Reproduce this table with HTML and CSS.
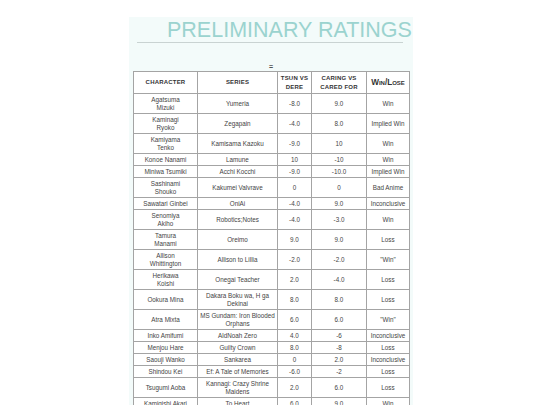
FILE: index.html
```html
<!DOCTYPE html>
<html lang="en">
<head>
    <meta charset="UTF-8">
    <title>Preliminary Ratings</title>
    <link rel="stylesheet" href="styles.css">
</head>
<body>
    <div class="panel">
        <h1 class="title">PRELIMINARY RATINGS</h1>
        <div class="rule"></div>
        <div class="eq">=</div>
        <table class="ratings">
            <colgroup>
                <col class="c-char">
                <col class="c-series">
                <col class="c-tsun">
                <col class="c-care">
                <col class="c-win">
            </colgroup>
            <thead>
                <tr>
                    <th>Character</th>
                    <th>Series</th>
                    <th>Tsun vs<br>Dere</th>
                    <th>Caring vs<br>Cared for</th>
                    <th class="winlose">Win/Lose</th>
                </tr>
            </thead>
            <tbody>
                <tr><td>Agatsuma<br>Mizuki</td><td>Yumeria</td><td>-8.0</td><td>9.0</td><td>Win</td></tr>
                <tr><td>Kaminagi<br>Ryoko</td><td>Zegapain</td><td>-4.0</td><td>8.0</td><td>Implied Win</td></tr>
                <tr><td>Kamiyama<br>Tenko</td><td>Kamisama Kazoku</td><td>-9.0</td><td>10</td><td>Win</td></tr>
                <tr><td>Konoe Nanami</td><td>Lamune</td><td>10</td><td>-10</td><td>Win</td></tr>
                <tr><td>Miniwa Tsumiki</td><td>Acchi Kocchi</td><td>-9.0</td><td>-10.0</td><td>Implied Win</td></tr>
                <tr><td>Sashinami<br>Shouko</td><td>Kakumei Valvrave</td><td>0</td><td>0</td><td>Bad Anime</td></tr>
                <tr><td>Sawatari Ginbei</td><td>OniAi</td><td>-4.0</td><td>9.0</td><td>Inconclusive</td></tr>
                <tr><td>Senomiya<br>Akiho</td><td>Robotics;Notes</td><td>-4.0</td><td>-3.0</td><td>Win</td></tr>
                <tr><td>Tamura<br>Manami</td><td>Oreimo</td><td>9.0</td><td>9.0</td><td>Loss</td></tr>
                <tr><td>Allison<br>Whittington</td><td>Allison to Lillia</td><td>-2.0</td><td>-2.0</td><td>"Win"</td></tr>
                <tr><td>Herikawa<br>Koishi</td><td>Onegai Teacher</td><td>2.0</td><td>-4.0</td><td>Loss</td></tr>
                <tr><td>Ookura Mina</td><td>Dakara Boku wa, H ga<br>Dekinai</td><td>8.0</td><td>8.0</td><td>Loss</td></tr>
                <tr><td>Atra Mixta</td><td>MS Gundam: Iron Blooded<br>Orphans</td><td>6.0</td><td>6.0</td><td>"Win"</td></tr>
                <tr><td>Inko Amifumi</td><td>AldNoah Zero</td><td>4.0</td><td>-6</td><td>Inconclusive</td></tr>
                <tr><td>Menjou Hare</td><td>Guilty Crown</td><td>8.0</td><td>-8</td><td>Loss</td></tr>
                <tr><td>Saouji Wanko</td><td>Sankarea</td><td>0</td><td>2.0</td><td>Inconclusive</td></tr>
                <tr><td>Shindou Kei</td><td>Ef: A Tale of Memories</td><td>-6.0</td><td>-2</td><td>Loss</td></tr>
                <tr><td>Tsugumi Aoba</td><td>Kannagi: Crazy Shrine<br>Maidens</td><td>2.0</td><td>6.0</td><td>Loss</td></tr>
                <tr><td>Kamigishi Akari</td><td>To Heart</td><td>6.0</td><td>9.0</td><td>Win</td></tr>
            </tbody>
        </table>
    </div>
</body>
</html>
```

FILE: styles.css
```css
body {
    margin: 0;
    background: #ffffff;
    font-family: "Liberation Sans", Arial, sans-serif;
}
.panel {
    width: 284px;
    margin: 17px 0 0 129px;
    background: #f3fbfa;
}
.title {
    margin: 0 0 0 38px;
    padding-top: 1px;
    font-size: 21.5px;
    line-height: 24px;
    font-weight: normal;
    color: #9bd3cf;
    white-space: nowrap;
}
.rule {
    height: 1px;
    margin: 0 10px 0 8px;
    background: #c9d3d2;
}
.eq {
    height: 28px;
    padding-top: 20px;
    box-sizing: border-box;
    text-align: center;
    font-size: 7px;
    line-height: 8px;
    font-weight: bold;
    color: #555;
    margin-left: 4px;
    width: 276px;
}
.ratings {
    margin-left: 4px;
    width: 276px;
    table-layout: fixed;
    border-collapse: collapse;
    background: #fff;
    color: #444;
    font-size: 6.3px;
    line-height: 8px;
}
.c-char { width: 64px; }
.c-series { width: 80px; }
.c-tsun { width: 34px; }
.c-care { width: 55px; }
.c-win { width: 43px; }
.ratings th,
.ratings td {
    border: 1px solid #a4a4a4;
    padding: 1.5px 1px;
    text-align: center;
    vertical-align: middle;
    white-space: nowrap;
}
.ratings th {
    padding: 1.5px 0;
    font-size: 6px;
    letter-spacing: 0.2px;
    line-height: 9px;
    font-weight: bold;
    text-transform: uppercase;
    color: #333;
}
.ratings th.winlose {
    text-transform: none;
    letter-spacing: 0;
    font-variant: small-caps;
    font-size: 8.2px;
}
```
